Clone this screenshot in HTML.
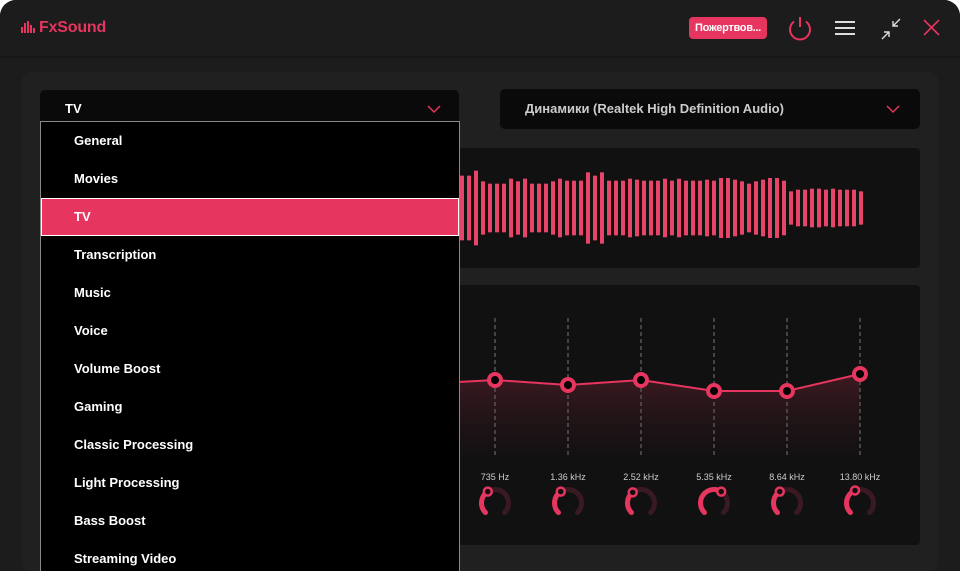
<!DOCTYPE html>
<html><head><meta charset="utf-8"><style>
html,body{margin:0;padding:0;background:#fff;}
body{width:960px;height:571px;overflow:hidden;font-family:"Liberation Sans","Noto Sans CJK SC",sans-serif;}
.win{position:absolute;left:0;top:0;width:960px;height:571px;background:#1c1c1c;border-radius:16px 16px 0 0;overflow:hidden;}
.hdr{position:absolute;left:0;top:0;width:960px;height:56px;background:#1c1c1c;border-bottom:2px solid #171717;}
.logo{position:absolute;left:21px;top:19px;color:#e6355f;font-size:16px;font-weight:bold;letter-spacing:-0.2px}
.don{position:absolute;left:689px;top:17px;width:78px;height:22px;background:#e6355f;border-radius:4px;color:#fff;font-size:11px;font-weight:bold;line-height:22px;text-align:center;letter-spacing:-0.3px}
.panel{position:absolute;left:22px;top:72px;width:916px;height:499px;background:#202020;border-radius:8px}
.sel{position:absolute;background:#0a0a0a;border-radius:5px;color:#ddd;font-size:13px;font-weight:bold;}
.menu{position:absolute;left:40px;top:121px;width:418px;height:460px;background:#000;border:1px solid #888;}
.item{height:38px;line-height:38px;padding-left:33px;color:#fff;font-size:13px;font-weight:bold;}
.item.on{background:#e6355f;outline:1px solid #fff;outline-offset:-1px}
</style></head><body>
<div class="win">
<div class="hdr">
<div class="logo"><svg width="16" height="12" style="vertical-align:-1px;margin-right:2px"><rect x="0" y="6" width="2" height="6" fill="#e6355f"/><rect x="3" y="2" width="2" height="10" fill="#e6355f"/><rect x="6" y="0" width="2" height="12" fill="#e6355f"/><rect x="9" y="4" width="2" height="8" fill="#e6355f"/><rect x="12" y="7" width="2" height="5" fill="#e6355f"/></svg>FxSound</div>
<div class="don">Пожертвов...</div>
<svg style="position:absolute;left:786px;top:14px" width="28" height="28"><path d="M8 7.5A10 10 0 1 0 20 7.5" fill="none" stroke="#e6355f" stroke-width="2"/><line x1="14" y1="3" x2="14" y2="13" stroke="#e6355f" stroke-width="2"/></svg>
<svg style="position:absolute;left:834px;top:19px" width="22" height="18"><g stroke="#ddd" stroke-width="2"><line x1="1" y1="3" x2="21" y2="3"/><line x1="1" y1="9" x2="21" y2="9"/><line x1="1" y1="15" x2="21" y2="15"/></g></svg>
<svg style="position:absolute;left:878px;top:16px" width="26" height="26"><g stroke="#ddd" stroke-width="1.4" fill="none"><path d="M22 3L15 10M15 5V10H20"/><path d="M4 23L11 16M11 21V16H6"/></g></svg>
<svg style="position:absolute;left:922px;top:18px" width="20" height="20"><g stroke="#e6355f" stroke-width="1.6"><line x1="2" y1="2" x2="17" y2="17"/><line x1="17" y1="2" x2="2" y2="17"/></g></svg>
</div>
<div class="panel"></div>
<div class="sel" style="left:40px;top:90px;width:419px;height:38px;"><span style="position:absolute;left:25px;top:11px;color:#fff">TV</span><svg style="position:absolute;left:387px;top:15px" width="14" height="9"><path d="M1 1L7 7L13 1" stroke="#e6355f" stroke-width="1.5" fill="none"/></svg></div>
<div class="sel" style="left:500px;top:89px;width:420px;height:40px;"><span style="position:absolute;left:25px;top:12px;color:#ccc">Динамики (Realtek High Definition Audio)</span><svg style="position:absolute;left:386px;top:16px" width="14" height="9"><path d="M1 1L7 7L13 1" stroke="#e6355f" stroke-width="1.5" fill="none"/></svg></div>
<svg style="position:absolute;left:0;top:0" width="960" height="571">
<defs><linearGradient id="g" x1="0" y1="0" x2="0" y2="1"><stop offset="0" stop-color="#4a1c26" stop-opacity="0.8"/><stop offset="1" stop-color="#1a1214" stop-opacity="0.3"/></linearGradient></defs>
<rect x="440" y="148" width="480" height="120" rx="4" fill="#111"/>
<rect x="440" y="285" width="480" height="260" rx="4" fill="#111"/>
<g fill="#e6456a" id="bars"></g>
<path d="M440 383 L495 380 L568 385 L641 380 L714 391 L787 391 L860 374 L860 455 L440 455Z" fill="url(#g)"/>
<g stroke="#555" stroke-width="1.5" stroke-dasharray="4 3">
<line x1="495" y1="318" x2="495" y2="455"/><line x1="568" y1="318" x2="568" y2="455"/><line x1="641" y1="318" x2="641" y2="455"/><line x1="714" y1="318" x2="714" y2="455"/><line x1="787" y1="318" x2="787" y2="455"/><line x1="860" y1="318" x2="860" y2="455"/></g>
<polyline points="440,383 495,380 568,385 641,380 714,391 787,391 860,374" fill="none" stroke="#e6355f" stroke-width="2"/>
<g fill="#000" stroke="#e6355f" stroke-width="4">
<circle cx="495" cy="380" r="6"/><circle cx="568" cy="385" r="6"/><circle cx="641" cy="380" r="6"/><circle cx="714" cy="391" r="6"/><circle cx="787" cy="391" r="6"/><circle cx="860" cy="374" r="6"/></g>
<g fill="#ccc" font-size="9" font-family="Liberation Sans,sans-serif" text-anchor="middle">
<text x="495" y="480">735 Hz</text><text x="568" y="480">1.36 kHz</text><text x="641" y="480">2.52 kHz</text><text x="714" y="480">5.35 kHz</text><text x="787" y="480">8.64 kHz</text><text x="860" y="480">13.80 kHz</text></g>
<g id="knobs"></g>
</svg>
<div class="menu">
<div class="item">General</div><div class="item">Movies</div><div class="item on">TV</div><div class="item">Transcription</div><div class="item">Music</div><div class="item">Voice</div><div class="item">Volume Boost</div><div class="item">Gaming</div><div class="item">Classic Processing</div><div class="item">Light Processing</div><div class="item">Bass Boost</div><div class="item">Streaming Video</div>
</div>
</div>
<script>
var tops=[108,108,93,125,132,132,132,117,125,117,132,132,132,125,117,123,123,123,98,108,98,123,123,123,117,120,123,123,123,117,123,117,123,123,123,120,123,115,115,120,125,132,125,120,115,115,123,155,150,150,147,147,150,147,150,150,150,155];
var g=document.getElementById('bars'),s='';
for(var i=0;i<tops.length;i++){var h=(205-tops[i])/3;s+='<rect x="'+(460+i*7)+'" y="'+(208-h)+'" width="4" height="'+(2*h)+'"/>';}
g.innerHTML=s;
var ks=[[495,0.38],[568,0.38],[641,0.36],[714,0.62],[787,0.38],[860,0.42]],k='';
ks.forEach(function(a){var cx=a[0],cy=503,r=13.5;function p(t){var ang=(t*270-225)*Math.PI/180;return [cx+r*Math.cos(ang),cy+r*Math.sin(ang)];}
var f=a[1];
function arc(t0,t1,c){var A=p(t0),B=p(t1),lg=(t1-t0)*270>180?1:0;return '<path d="M'+A[0]+' '+A[1]+' A'+r+' '+r+' 0 '+lg+' 1 '+B[0]+' '+B[1]+'" fill="none" stroke="'+c+'" stroke-width="5" stroke-linecap="round"/>';}
k+=arc(0,1,'#3a1a22')+arc(0,f,'#e6355f');var P=p(f);k+='<circle cx="'+P[0]+'" cy="'+P[1]+'" r="4" fill="#111" stroke="#e6355f" stroke-width="2.5"/>';});
document.getElementById('knobs').innerHTML=k;
</script>
</body></html>
